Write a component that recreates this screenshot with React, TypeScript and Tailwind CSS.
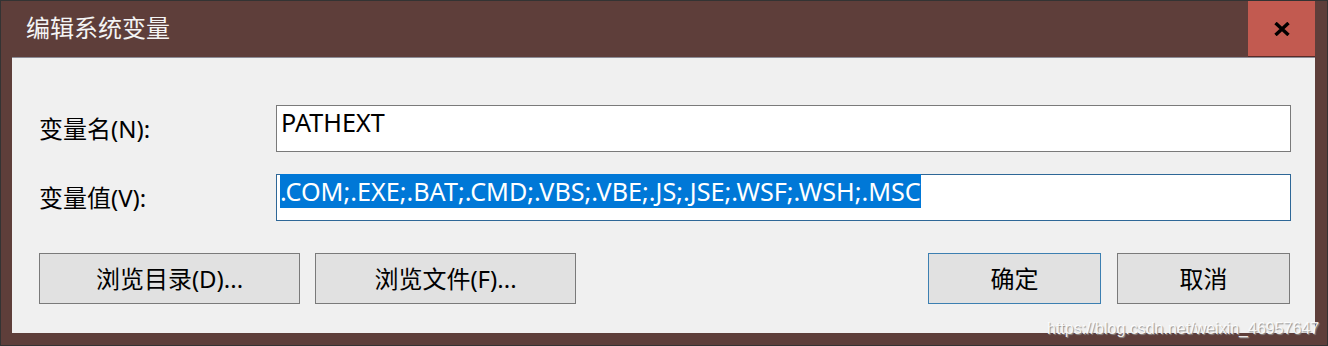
import React from "react";

const ui = "font-['Noto_Sans','Noto_Sans_CJK_SC',sans-serif]";

function DialogButton({ label, primary = false, wide = false }: { label: string; primary?: boolean; wide?: boolean }) {
  return (
    <button
      className={`h-[51px] ${wide ? "w-[261px]" : "w-[173px]"} border ${
        primary ? "border-[#3c7fb1]" : "border-[#7a7a7a]"
      } bg-[#e1e1e1] text-[24px] leading-none text-black`}
    >
      {label}
    </button>
  );
}

function CloseIcon() {
  return (
    <svg width="16" height="14" viewBox="0 0 16 14">
      <path d="M1.5 1 L14.5 13 M14.5 1 L1.5 13" stroke="#000" strokeWidth="3.4" />
    </svg>
  );
}

export default function App() {
  return (
    <div className={`relative flex h-[346px] w-[1328px] flex-col border border-[#333] bg-[#5e3e3a] ${ui}`}>
      {/* title bar */}
      <div className="flex h-[56px] items-stretch">
        <div className="flex flex-1 items-center pl-[25px] pb-[2px] text-[24px] text-[#f4f4f4]">编辑系统变量</div>
        <div className="mr-[12px] flex w-[67px] items-center justify-center border-b border-[#5a2a26] bg-[#c25a50]">
          <CloseIcon />
        </div>
      </div>

      {/* body */}
      <div className="ml-[11px] mr-[12px] flex h-[276px] flex-col border-t border-[#8c8c96] bg-[#f0f0f0] pt-[47px] pl-[27px] pr-[24px]">
        <div className="flex items-center">
          <div className="w-[237px] text-[24px] text-black">变量名(N):</div>
          <div className="h-[47px] flex-1 border border-[#7a7a7a] bg-white pl-[4px] pt-[1px] text-[25.2px] leading-[31px] text-black">
            PATHEXT
          </div>
        </div>
        <div className="mt-[22px] flex items-center">
          <div className="w-[237px] text-[24px] text-black">变量值(V):</div>
          <div className="h-[47px] flex-1 border border-[#2e6797] bg-white pl-[3px] pt-[1px] text-[25.2px] leading-[31px]">
            <span className="bg-[#0078d7] text-white">.COM;.EXE;.BAT;.CMD;.VBS;.VBE;.JS;.JSE;.WSF;.WSH;.MSC</span>
          </div>
        </div>
        <div className="mt-[32px] flex pr-[1px]">
          <div className="flex gap-[15px]">
            <DialogButton label="浏览目录(D)..." wide />
            <DialogButton label="浏览文件(F)..." wide />
          </div>
          <div className="ml-auto flex gap-[16px]">
            <DialogButton label="确定" primary />
            <DialogButton label="取消" />
          </div>
        </div>
      </div>

      {/* watermark */}
      <div className="absolute left-[1046px] top-[316px] font-['Liberation_Sans',Arial,sans-serif] text-[16px] text-[rgba(255,255,255,0.9)] [text-shadow:1px_1px_1px_#8f8f8f]">
        https://blog.csdn.net/weixin_46957647
      </div>
    </div>
  );
}
